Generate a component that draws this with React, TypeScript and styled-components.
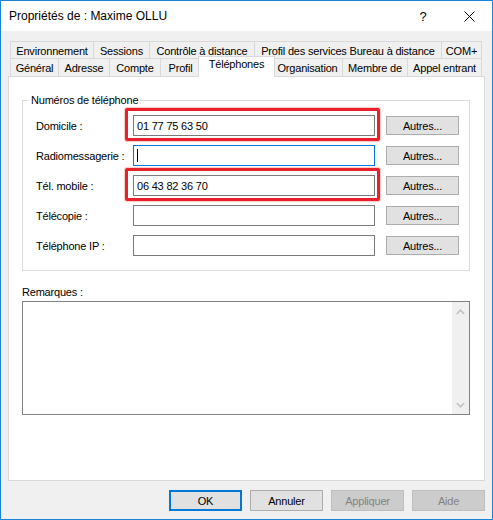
import * as React from "react";
import styled, { createGlobalStyle } from "styled-components";

const GlobalStyle = createGlobalStyle`
  html, body {
    margin: 0;
    padding: 0;
    background: #ffffff;
  }
  body {
    font-family: "Liberation Sans", Arial, sans-serif;
    font-size: 11px;
    letter-spacing: -0.2px;
    color: #000000;
  }
`;

const Window = styled.div`
  box-sizing: border-box;
  width: 493px;
  height: 520px;
  border: 1px solid #1883d7;
  background: #f0f0f0;
  display: flex;
  flex-direction: column;
`;

const TitleBar = styled.div`
  height: 30px;
  flex: none;
  background: #ffffff;
  display: flex;
  align-items: center;
  padding-left: 8px;
  font-family: "Liberation Sans", Arial, sans-serif;
  font-size: 12px;
  letter-spacing: 0;
`;

const Title = styled.div`
  flex: 1;
`;

const CaptionButton = styled.div`
  width: 46px;
  height: 30px;
  display: flex;
  align-items: center;
  justify-content: center;
  font-size: 13px;
`;

const Body = styled.div`
  flex: 1;
  padding: 10px 7px 0 7px;
  display: flex;
  flex-direction: column;
`;

const TabStrip = styled.div`
  padding: 0 4px 0 2px;
  display: flex;
  flex-direction: column;
`;

const TabRow = styled.div<{ $h: number }>`
  display: flex;
  height: ${p => p.$h}px;
`;

const Tab = styled.div<{ $w: number; $last?: boolean; $front?: boolean }>`
  box-sizing: border-box;
  flex: none;
  width: ${p => p.$w}px;
  border-left: 1px solid #d9d9d9;
  border-right: ${p => (p.$last ? "1px solid #d9d9d9" : "none")};
  border-top: 1px solid #d9d9d9;
  background: #f0f0f0;
  display: flex;
  align-items: center;
  justify-content: center;
  white-space: nowrap;
  padding-top: ${p => (p.$front ? 0 : 1)}px;
`;

const ActiveTab = styled.div<{ $w: number }>`
  box-sizing: border-box;
  flex: none;
  position: relative;
  z-index: 1;
  width: ${p => p.$w}px;
  margin: -2px -3px -1px -2px;
  border: 1px solid #d9d9d9;
  border-bottom: none;
  background: #ffffff;
  display: flex;
  align-items: center;
  justify-content: center;
  padding-bottom: 6px;
  white-space: nowrap;
`;

const Panel = styled.div`
  box-sizing: border-box;
  height: 405px;
  flex: none;
  background: #ffffff;
  border: 1px solid #d9d9d9;
  padding: 17px 14px 0 13px;
  display: flex;
  flex-direction: column;
`;

const Group = styled.fieldset`
  margin: 0;
  min-width: 0;
  border: 1px solid #dcdcdc;
  padding: 8px 9px 14px 13px;
  display: flex;
  flex-direction: column;
  gap: 9px;
`;

const GroupLegend = styled.legend`
  padding: 0 2px;
  margin-left: -7px;
  line-height: 13px;
`;

const FieldRow = styled.div`
  display: grid;
  grid-template-columns: 86px 242px 73px;
  column-gap: 11px;
  align-items: center;
  height: 21px;
`;

const FieldLabel = styled.div`
  white-space: nowrap;
`;

const InputWrap = styled.div`
  position: relative;
  height: 21px;
`;

const TextBox = styled.div<{ $focused?: boolean }>`
  box-sizing: border-box;
  height: 21px;
  border: 1px solid ${p => (p.$focused ? "#0078d7" : "#7a7a7a")};
  background: #ffffff;
  padding-left: 3px;
  display: flex;
  align-items: center;
`;

const Caret = styled.span`
  display: inline-block;
  width: 1px;
  height: 13px;
  background: #000000;
`;

const Highlight = styled.div`
  position: absolute;
  top: -7px;
  right: -5px;
  bottom: -5px;
  left: -8px;
  border: 3px solid #e8202b;
  border-radius: 2px;
  box-shadow: 0 0 1px 1px rgba(232, 32, 43, 0.25);
  pointer-events: none;
`;

const Button = styled.div<{ $h?: number; $disabled?: boolean; $default?: boolean }>`
  box-sizing: border-box;
  width: 73px;
  height: ${p => p.$h ?? 21}px;
  border: ${p =>
    p.$default ? "2px solid #0078d7" : p.$disabled ? "1px solid #bfbfbf" : "1px solid #adadad"};
  background: ${p => (p.$disabled ? "#cccccc" : "#e1e1e1")};
  color: ${p => (p.$disabled ? "#838383" : "#000000")};
  display: flex;
  align-items: center;
  justify-content: center;
`;

const NotesLabel = styled.div`
  margin-top: 15px;
  line-height: 13px;
`;

const NotesBox = styled.div`
  box-sizing: border-box;
  margin-top: 2px;
  height: 114px;
  border: 1px solid #828282;
  display: flex;
  justify-content: flex-end;
`;

const ScrollBar = styled.div`
  width: 17px;
  background: #f0f0f0;
  display: flex;
  flex-direction: column;
  justify-content: space-between;
  align-items: center;
  padding: 7px 0 6px;
`;

const Footer = styled.div`
  margin-top: 9px;
  display: flex;
  justify-content: flex-end;
  gap: 8px;
`;

const Chevron = ({ up }: { up?: boolean }) => (
  <svg width="9" height="6" viewBox="0 0 9 6">
    <polyline
      points={up ? "0.8,5 4.5,1.2 8.2,5" : "0.8,1 4.5,4.8 8.2,1"}
      fill="none"
      stroke="#c2c2c2"
      strokeWidth="1.6"
    />
  </svg>
);

const CloseGlyph = () => (
  <svg width="11" height="11" viewBox="0 0 11 11">
    <line x1="0.5" y1="0.5" x2="10.5" y2="10.5" stroke="#000" strokeWidth="1" />
    <line x1="10.5" y1="0.5" x2="0.5" y2="10.5" stroke="#000" strokeWidth="1" />
  </svg>
);

const backRow: [string, number][] = [
  ["Environnement", 83],
  ["Sessions", 56],
  ["Contrôle à distance", 105],
  ["Profil des services Bureau à distance", 187],
  ["COM+", 41],
];

const frontRow: [string, number, boolean?][] = [
  ["Général", 48],
  ["Adresse", 51],
  ["Compte", 51],
  ["Profil", 40],
  ["Téléphones", 77, true],
  ["Organisation", 70],
  ["Membre de", 65],
  ["Appel entrant", 75],
];

interface IField {
  label: string;
  value?: string;
  marked?: boolean;
  focused?: boolean;
}

const fields: IField[] = [
  { label: "Domicile :", value: "01 77 75 63 50", marked: true },
  { label: "Radiomessagerie :", focused: true },
  { label: "Tél. mobile :", value: "06 43 82 36 70", marked: true },
  { label: "Télécopie :" },
  { label: "Téléphone IP :" },
];

const App: React.FC = () => (
  <>
    <GlobalStyle />
    <Window>
      <TitleBar>
        <Title>Propriétés de : Maxime OLLU</Title>
        <CaptionButton>?</CaptionButton>
        <CaptionButton>
          <CloseGlyph />
        </CaptionButton>
      </TitleBar>
      <Body>
        <TabStrip>
          <TabRow $h={17}>
            {backRow.map(([name, w], i) => (
              <Tab key={name} $w={w} $last={i === backRow.length - 1}>
                {name}
              </Tab>
            ))}
          </TabRow>
          <TabRow $h={18}>
            {frontRow.map(([name, w, active], i) =>
              active ? (
                <ActiveTab key={name} $w={w}>
                  {name}
                </ActiveTab>
              ) : (
                <Tab key={name} $w={w} $front $last={i === frontRow.length - 1}>
                  {name}
                </Tab>
              )
            )}
          </TabRow>
        </TabStrip>
        <Panel>
          <Group>
            <GroupLegend>Numéros de téléphone</GroupLegend>
            {fields.map(f => (
              <FieldRow key={f.label}>
                <FieldLabel>{f.label}</FieldLabel>
                <InputWrap>
                  <TextBox $focused={f.focused}>
                    {f.focused ? <Caret /> : f.value}
                  </TextBox>
                  {f.marked && <Highlight />}
                </InputWrap>
                <Button $h={19}>Autres...</Button>
              </FieldRow>
            ))}
          </Group>
          <NotesLabel>Remarques :</NotesLabel>
          <NotesBox>
            <ScrollBar>
              <Chevron up />
              <Chevron />
            </ScrollBar>
          </NotesBox>
        </Panel>
        <Footer>
          <Button $default>OK</Button>
          <Button>Annuler</Button>
          <Button $disabled>Appliquer</Button>
          <Button $disabled>Aide</Button>
        </Footer>
      </Body>
    </Window>
  </>
);

export default App;
